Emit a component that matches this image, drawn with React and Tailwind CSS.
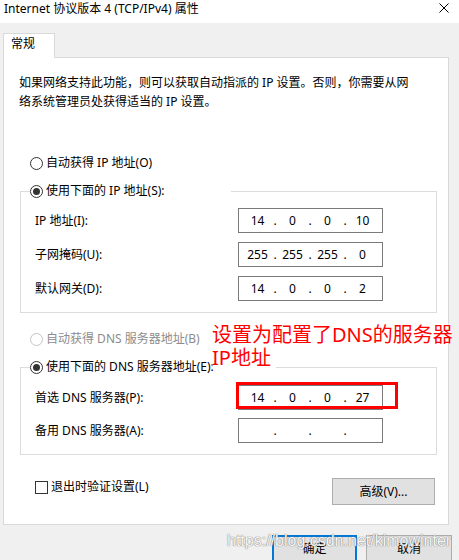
import { Fragment } from "react";

function Radio({ checked = false, disabled = false }) {
  return (
    <span
      className={`flex h-[13px] w-[13px] shrink-0 items-center justify-center rounded-full border bg-white ${
        disabled ? "border-[#c4c4c4]" : "border-[#333333]"
      }`}
    >
      {checked && <span className="h-[7px] w-[7px] rounded-full bg-[#333333]" />}
    </span>
  );
}

function IpField({ parts = ["", "", "", ""] }) {
  return (
    <div className="flex h-[25px] w-[145px] items-center border border-[#7a7a7a] bg-white pl-[4px] text-[12px] leading-[16px]">
      {parts.map((p, i) => (
        <Fragment key={i}>
          {i > 0 && <span className="w-[6px] text-center">.</span>}
          <span className="w-[29px] text-center">{p}</span>
        </Fragment>
      ))}
    </div>
  );
}

function FieldRow({ label, parts }) {
  return (
    <div className="flex h-[25px] items-center justify-between">
      <span>{label}</span>
      <IpField parts={parts} />
    </div>
  );
}

function Group({ title, width, children, className = "" }) {
  return (
    <fieldset className={`ml-[16px] w-[417px] border border-[#dcdcdc] pb-[11px] ${className}`}>
      <legend className={`ml-[9px] flex h-[20px] items-center gap-[3px] bg-white ${width}`}>
        <Radio checked />
        <span>{title}</span>
      </legend>
      <div className="pl-[14px] pr-[53px]">{children}</div>
    </fieldset>
  );
}

export default function App() {
  return (
    <div className="relative h-[560px] w-[459px] overflow-hidden bg-[#f0f0f0] font-['Noto_Sans','Noto_Sans_CJK_SC',sans-serif] text-[12px] leading-[16px] text-black">
      {/* title bar */}
      <div className="flex h-[23px] items-start justify-between bg-white pl-[4px] pr-[10px]">
        <span className="pt-[1px]">Internet 协议版本 4 (TCP/IPv4) 属性</span>
        <svg className="mt-[3px]" width="10" height="10" viewBox="0 0 10 10">
          <path d="M0.5 0.5 L9.5 9.5 M9.5 0.5 L0.5 9.5" stroke="#000" strokeWidth="1" fill="none" />
        </svg>
      </div>

      {/* tab */}
      <div className="relative z-10 -mb-px ml-[3px] mt-[10px] h-[25px] w-[52px] border border-b-0 border-[#d9d9d9] bg-white pl-[7px] pt-[2px]">
        常规
      </div>

      {/* tab page */}
      <div className="ml-[3px] flex h-[468px] w-[446px] flex-col border border-[#d9d9d9] bg-white">
        <p className="pl-[15px] pt-[15px] leading-[19px]">
          如果网络支持此功能，则可以获取自动指派的 IP 设置。否则，你需要从网
          <br />
          络系统管理员处获得适当的 IP 设置。
        </p>

        <div className="mt-[42px] flex h-[20px] items-center gap-[3px] pl-[26px]">
          <Radio />
          <span>自动获得 IP 地址(O)</span>
        </div>

        <Group title="使用下面的 IP 地址(S):" width="w-[201px]" className="mt-[8px]">
          <div className="flex flex-col gap-[9px] pt-[7px]">
            <FieldRow label="IP 地址(I):" parts={["14", "0", "0", "10"]} />
            <FieldRow label="子网掩码(U):" parts={["255", "255", "255", "0"]} />
            <FieldRow label="默认网关(D):" parts={["14", "0", "0", "2"]} />
          </div>
        </Group>

        <div className="mt-[16px] flex h-[20px] items-center gap-[3px] pl-[26px] text-[#8c8c8c]">
          <Radio disabled />
          <span>自动获得 DNS 服务器地址(B)</span>
        </div>

        <Group title="使用下面的 DNS 服务器地址(E):" width="w-[246px]" className="mt-[8px]">
          <div className="flex flex-col gap-[8px] pt-[8px]">
            <FieldRow label="首选 DNS 服务器(P):" parts={["14", "0", "0", "27"]} />
            <FieldRow label="备用 DNS 服务器(A):" />
          </div>
        </Group>

        <div className="flex items-start justify-between pl-[31px] pr-[13px]">
          <div className="mt-[24px] flex items-center gap-[3px]">
            <span className="h-[13px] w-[13px] border border-[#333333] bg-white" />
            <span>退出时验证设置(L)</span>
          </div>
          <button className="mt-[23px] h-[27px] w-[103px] border border-[#adadad] bg-[#e1e1e1]">
            高级(V)...
          </button>
        </div>
      </div>

      {/* dialog buttons */}
      <div className="mr-[7px] mt-[10px] flex justify-end gap-[9px]">
        <button className="h-[28px] w-[85px] border-2 border-[#0078d7] bg-[#e1e1e1]">确定</button>
        <button className="h-[28px] w-[86px] border border-[#adadad] bg-[#e1e1e1]">取消</button>
      </div>

      {/* red note */}
      <div className="absolute left-[212px] top-[323px] text-[20px] leading-[23px] text-[#ff0000] [text-shadow:0_0_2px_#fff,0_0_2px_#fff,0_0_2px_#fff]">
        设置为配置了DNS的服务器
        <br />
        IP地址
      </div>
      <div className="absolute left-[236px] top-[382px] h-[27px] w-[162px] border-[3px] border-[#ff0000]" />

      {/* watermark */}
      <div className="absolute left-[227px] top-[531px] font-['Liberation_Sans',sans-serif] text-[16px] leading-[20px] text-[#f6f6f6] [text-shadow:0_0_1px_#7d7d7d,0_0_1px_#7d7d7d]">
        https://blog.csdn.net/kimowinter
      </div>
    </div>
  );
}
